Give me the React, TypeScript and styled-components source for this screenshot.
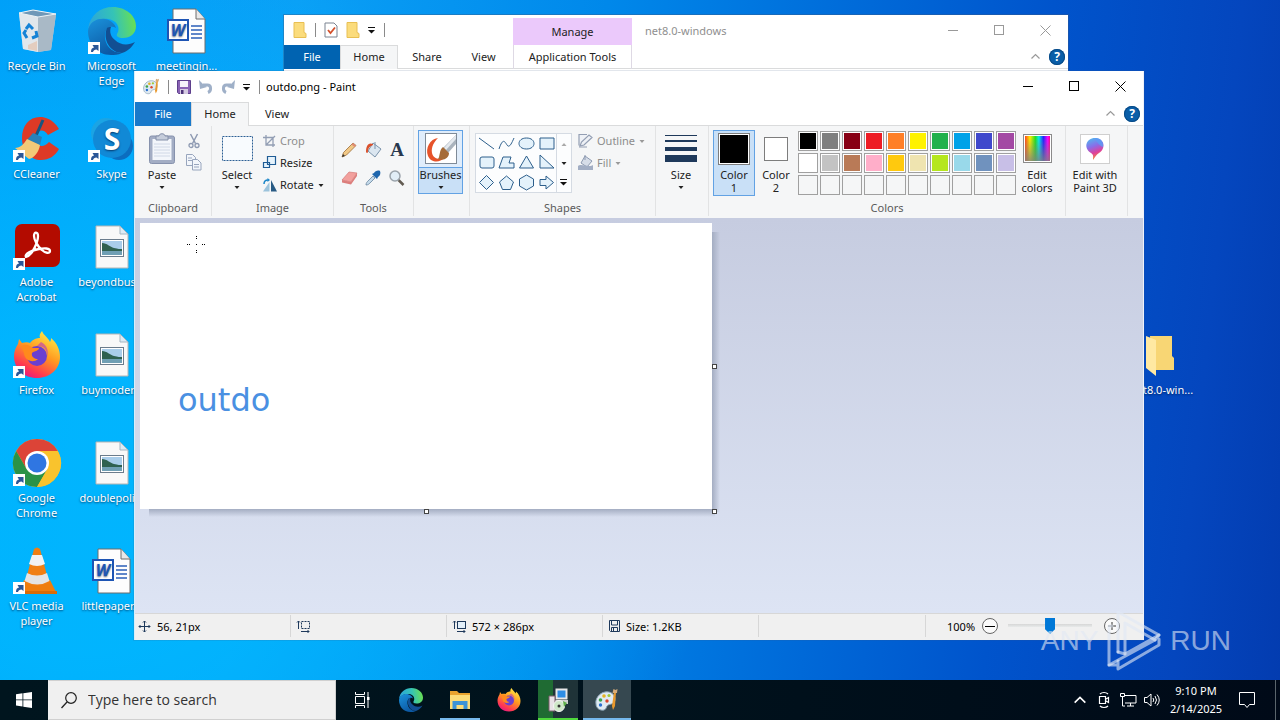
import React from "react";
import styled, { createGlobalStyle, css } from "styled-components";

const Global = createGlobalStyle`
  *, *::before, *::after { box-sizing: border-box; }
  html, body { margin: 0; height: 100%; }
  #root { height: 100%; }
  body, button, input {
    font-family: "Noto Sans", "Open Sans", sans-serif;
    font-size: 11px;
    line-height: 15px;
  }
  button { border: 0; padding: 0; margin: 0; background: none; color: inherit; }
  svg { display: block; flex: none; overflow: visible; }
`;

/* ---------- desktop ---------- */

const Screen = styled.div`
  min-height: 100vh;
  display: flex;
  flex-direction: column;
  overflow: hidden;
`;

const Desktop = styled.main`
  position: relative;
  flex: 1;
  overflow: hidden;
  background:
    radial-gradient(ellipse 50% 80% at 6% 72%, rgba(0, 184, 255, 0.85) 30%, rgba(0, 184, 255, 0) 100%),
    linear-gradient(96deg, #009df8 0%, #0aa0f6 22%, #0088ea 45%, #0070dc 60%, #0054cc 78%, #0446be 92%, #033cb0 100%);
`;

const IconGrid = styled.div`
  display: grid;
  grid-template-columns: repeat(auto-fill, 75px);
  grid-template-rows: repeat(6, 108px);
`;

const Shortcut = styled.button<{ $col: number; $row: number }>`
  grid-column: ${(p) => p.$col};
  grid-row: ${(p) => p.$row};
  display: flex;
  flex-direction: column;
  align-items: center;
  gap: 3px;
  padding: 7px 2px 0 0;
  color: #fff;
  text-shadow: 0 1px 2px rgba(0, 20, 60, 0.7);
`;

const ShortcutLabel = styled.span`
  width: 68px;
  text-align: center;
`;

/* ---------- windows ---------- */

const Win = styled.section`
  position: absolute;
  display: flex;
  flex-direction: column;
  background: #fff;
  color: #222;
`;

const ExplorerWin = styled(Win)`
  top: 15px;
  left: 284px;
  right: 212px;
  height: 400px;
  box-shadow: 0 0 0 1px rgba(60, 90, 130, 0.4);
`;

const PaintWin = styled(Win)`
  top: 71px;
  left: 134px;
  right: 136px;
  bottom: 40px;
  border-left: 1px solid #d5eefb;
  border-right: 1px solid #eef1fa;
  box-shadow: 0 0 0 1px rgba(60, 90, 130, 0.15);
`;

const TitleBar = styled.header<{ $h: number }>`
  display: flex;
  align-items: center;
  height: ${(p) => p.$h}px;
  flex: none;
`;

const QuickBar = styled.div<{ $pad: number }>`
  display: flex;
  align-items: center;
  gap: 8px;
  padding-left: ${(p) => p.$pad}px;
`;

const Bar = styled.span`
  width: 1px;
  height: 14px;
  background: #8a8a8a;
`;

const WinTitle = styled.h1<{ $muted?: boolean; $pad: number }>`
  margin: 0;
  flex: 1;
  padding-left: ${(p) => p.$pad}px;
  font-size: 11px;
  font-weight: 400;
  color: ${(p) => (p.$muted ? "#8f8f8f" : "#000")};
`;

const CaptionButton = styled.button<{ $muted?: boolean }>`
  width: 46px;
  height: 30px;
  display: grid;
  place-items: center;
  color: ${(p) => (p.$muted ? "#999" : "#000")};
`;

const TabRow = styled.nav`
  display: flex;
  height: 24px;
  flex: none;
  border-bottom: 1px solid #dadbdc;
`;

const Tab = styled.button<{ $kind?: "file" | "active"; $w?: number; $file?: string }>`
  height: 24px;
  width: ${(p) => p.$w ?? 56}px;
  padding-bottom: 1px;
  ${(p) =>
    p.$kind === "file" &&
    css`
      background: ${p.$file ?? "#1979ca"};
      color: #fff;
    `}
  ${(p) =>
    p.$kind === "active" &&
    css`
      background: #f5f6f7;
      border: 1px solid #dadbdc;
      border-bottom: 0;
      padding-bottom: 2px;
    `}
`;

const TabTools = styled.div`
  margin-left: auto;
  display: flex;
  align-items: center;
  gap: 9px;
  padding-right: 3px;
`;

const HelpButton = styled.button`
  width: 16px;
  height: 16px;
  border-radius: 50%;
  background: #0a5ea8;
  box-shadow: inset 0 0 0 1px #084a86;
  color: #fff;
  font-weight: 700;
  font-size: 12px;
  line-height: 16px;
`;

const Manage = styled.div`
  align-self: flex-end;
  width: 119px;
  height: 27px;
  margin-left: 128px;
  background: #ebc9fb;
  text-align: center;
  line-height: 28px;
`;

const ContextTab = styled(Tab)`
  margin-left: 2px;
  border-left: 1px solid #ded9e4;
  border-right: 1px solid #ded9e4;
`;

/* ---------- ribbon ---------- */

const Ribbon = styled.div`
  display: flex;
  height: 92px;
  flex: none;
  background: #f5f6f7;
  padding-bottom: 2px;
  overflow: hidden;
`;

const Group = styled.section<{ $w: number }>`
  flex: none;
  width: ${(p) => p.$w}px;
  display: flex;
  flex-direction: column;
  padding-top: 4px;
  border-right: 1px solid #e2e3e4;
`;

const GroupBody = styled.div<{ $pad?: number; $gap?: number }>`
  display: flex;
  gap: ${(p) => p.$gap ?? 0}px;
  padding-left: ${(p) => p.$pad ?? 4}px;
  height: 66px;
`;

const GroupLabel = styled.h2`
  margin: 4px 0 0;
  font-size: 11px;
  line-height: 15px;
  font-weight: 400;
  text-align: center;
  color: #5a5a5a;
`;

const BigButton = styled.button<{ $w: number; $on?: boolean }>`
  flex: none;
  width: ${(p) => p.$w}px;
  height: 66px;
  display: flex;
  flex-direction: column;
  align-items: center;
  padding-top: 2px;
  border: 1px solid ${(p) => (p.$on ? "#62a2e4" : "transparent")};
  background: ${(p) => (p.$on ? "#c9e0f7" : "transparent")};
  line-height: 13px;
  white-space: pre-line;
`;

const BrushButton = styled(BigButton)`
  height: 64px;
  background: linear-gradient(#e0edfb 36px, #62a2e4 36px, #62a2e4 37px, #c9e0f7 37px);
`;

const IconSlot = styled.span`
  height: 31px;
  margin-bottom: 4px;
  display: flex;
  align-items: center;
  justify-content: center;
`;

const Stack = styled.div<{ $pad?: number; $center?: boolean }>`
  display: flex;
  flex-direction: column;
  padding-left: ${(p) => p.$pad ?? 0}px;
  ${(p) => p.$center && "align-items: center;"}
`;

const SmallButton = styled.button<{ $off?: boolean }>`
  display: flex;
  align-items: center;
  gap: 4px;
  height: 22px;
  padding-bottom: 1px;
  color: ${(p) => (p.$off ? "#8d8d8d" : "#222")};
`;

const ToolGrid = styled.div`
  display: grid;
  grid-template-columns: repeat(3, 24px);
  grid-template-rows: repeat(2, 28px);
  padding-top: 6px;
`;

const CellButton = styled.button`
  display: grid;
  place-items: center;
`;

const Gallery = styled.div`
  display: flex;
  height: 60px;
  margin-top: 3px;
  border: 1px solid #d5dbe3;
  background: #fcfdfe;
`;

const ShapeGrid = styled.div`
  display: grid;
  grid-template-columns: repeat(4, 20px);
  grid-template-rows: 18px 20px 20px;
`;

const GalleryScroll = styled.div`
  display: grid;
  grid-template-rows: repeat(3, 1fr);
  width: 15px;
  border-left: 1px solid #d5dbe3;
`;

const Swatch = styled.span<{ $c: string; $s: number }>`
  width: ${(p) => p.$s}px;
  height: ${(p) => p.$s}px;
  background: ${(p) => p.$c};
  border: 1px solid #7d7d7d;
  box-shadow: inset 0 0 0 1px #fff;
`;

const Palette = styled.div`
  display: grid;
  grid-template-columns: repeat(10, 20px);
  grid-auto-rows: 20px;
  gap: 2px;
  padding-top: 1px;
  margin-left: 1px;
  height: 66px;
`;

const Color = styled.button<{ $c?: string }>`
  border: 1px solid #a0a0a0;
  background: ${(p) => p.$c ?? "#f5f6f7"};
  box-shadow: inset 0 0 0 1px ${(p) => (p.$c ? "#fff" : "#f5f6f7")};
`;

const Spectrum = styled.span`
  width: 29px;
  height: 29px;
  border: 1px solid #8b8b8b;
  box-shadow: inset 0 0 0 1px #fff;
  background:
    linear-gradient(transparent 10%, rgba(128, 128, 128, 0.85)),
    linear-gradient(90deg, #f22, #fe0 22%, #2d2 42%, #0ee 55%, #22f 72%, #f0f 88%, #f04);
`;

const Tile = styled.span`
  width: 30px;
  height: 30px;
  display: grid;
  place-items: center;
  border: 1px solid #cfcfcf;
  background: #fff;
`;

/* ---------- work area ---------- */

const WorkArea = styled.div`
  flex: 1;
  min-height: 0;
  padding: 5px;
  overflow: hidden;
  background: linear-gradient(#c6cce0, #dde4f4);
`;

const Sheet = styled.div`
  position: relative;
  width: 572px;
  height: 286px;
  background: #fff;
  &::before {
    content: "";
    position: absolute;
    left: 9px;
    right: -3px;
    top: 100%;
    height: 8px;
    background: linear-gradient(#a4adc2, rgba(190, 199, 218, 0));
  }
  &::after {
    content: "";
    position: absolute;
    left: 100%;
    top: 9px;
    bottom: -3px;
    width: 8px;
    background: linear-gradient(90deg, #a4adc2, rgba(190, 199, 218, 0));
  }
`;

const Handle = styled.span<{ $x: string; $y: string }>`
  position: absolute;
  z-index: 1;
  left: ${(p) => p.$x};
  top: ${(p) => p.$y};
  width: 5px;
  height: 5px;
  background: #fff;
  border: 1px solid #444;
`;

const Drawn = styled.span`
  position: absolute;
  left: 38px;
  top: 158px;
  font-family: "DejaVu Sans", sans-serif;
  font-size: 32px;
  line-height: 38px;
  color: #4a90e2;
`;

const Cursor = styled.svg`
  position: absolute;
  left: 46px;
  top: 12px;
`;

/* ---------- status bar ---------- */

const StatusBar = styled.footer`
  display: flex;
  height: 27px;
  flex: none;
  background: #f0f0f0;
  border-top: 1px solid #d7d7d7;
  padding-bottom: 2px;
  color: #000;
`;

const StatusCell = styled.div<{ $w?: number; $pad?: number }>`
  ${(p) => (p.$w ? `width: ${p.$w}px;` : "flex: 1;")}
  display: flex;
  align-items: center;
  gap: 6px;
  padding-left: ${(p) => p.$pad ?? 6}px;
  margin: 1px 0;
  border-right: 1px solid #d7d7d7;
`;

const ZoomBox = styled.div`
  width: 217px;
  display: flex;
  align-items: center;
  padding-left: 21px;
`;

const RoundButton = styled.button`
  width: 16px;
  height: 16px;
  margin-left: 7px;
  display: grid;
  place-items: center;
  border: 1px solid #666;
  border-radius: 50%;
  background: #fafafa;
`;

const Slider = styled.input`
  appearance: none;
  width: 84px;
  height: 20px;
  margin: 0 5px 0 10px;
  background: linear-gradient(transparent 8px, #d6d6d6 8px, #e7eaea 11px, transparent 11px);
  &::-webkit-slider-thumb {
    appearance: none;
    width: 10px;
    height: 16px;
    background: #0078d7;
    clip-path: polygon(0 0, 100% 0, 100% 70%, 50% 100%, 0 70%);
  }
`;

/* ---------- watermark ---------- */

const Watermark = styled.div`
  position: absolute;
  right: 49px;
  bottom: 6px;
  display: flex;
  align-items: center;
  gap: 8px;
  pointer-events: none;
  color: rgba(225, 232, 245, 0.62);
  font-family: "Liberation Sans Narrow", "Liberation Sans", sans-serif;
  font-size: 28px;
  line-height: 66px;
`;

/* ---------- taskbar ---------- */

const Taskbar = styled.nav`
  display: flex;
  height: 40px;
  flex: none;
  background: linear-gradient(90deg, #00151e, #00121c 50%, #000a18);
  color: #fff;
`;

const StartButton = styled.button`
  width: 48px;
  display: grid;
  place-items: center;
`;

const Search = styled.label`
  width: 288px;
  display: flex;
  align-items: center;
  gap: 11px;
  padding-left: 12px;
  background: #f0f0f0;
  border: 1px solid #d0d0d0;
  border-left-color: #f0f0f0;
`;

const SearchInput = styled.input`
  flex: 1;
  min-width: 0;
  border: 0;
  padding: 0;
  background: none;
  font-family: "Open Sans", "Noto Sans", sans-serif;
  font-size: 14px;
  line-height: 20px;
  &::placeholder { color: #333; opacity: 1; }
`;

const Apps = styled.div`
  display: flex;
  gap: 1px;
  flex: 1;
  padding-left: 2px;
`;

const AppButton = styled.button<{ $line?: string; $bg?: string; $wide?: boolean }>`
  width: ${(p) => (p.$wide ? 48 : 40)}px;
  margin: 0 ${(p) => (p.$wide ? 0 : 4)}px;
  display: grid;
  place-items: center;
  background: ${(p) => p.$bg ?? "none"};
  box-shadow: ${(p) => (p.$line ? `inset 0 -2px ${p.$line}` : "none")};
`;

const Tray = styled.div`
  display: flex;
  align-items: center;
`;

const TrayButton = styled.button<{ $w?: number }>`
  width: ${(p) => p.$w ?? 24}px;
  height: 40px;
  display: grid;
  place-items: center;
`;

const Clock = styled.button`
  width: 64px;
  height: 40px;
  line-height: 18px;
`;

const ShowDesktop = styled.button`
  width: 5px;
  height: 40px;
  margin-left: 9px;
  border-left: 1px solid #5a656c;
`;

/* ---------- icons ---------- */

const Arrow = () => (
  <g transform="translate(-1 -1)">
    <rect x="1" y="36" width="12" height="12" fill="#fff" />
    <path d="M4 46c0-3 1-4 3-4.500l-1.500-2.500h6v6l-2-1.500c-2 0-3 1-3.500 2.500z" fill="#2b5797" />
  </g>
);

const RecycleIcon = () => (
  <svg width="48" height="48" viewBox="0 0 48 48">
    <path d="M6 6l14-3 23 4-5 36-13 2-15-3z" fill="#c3d3de" opacity=".95" />
    <path d="M6 6l19 4v35l-15-3z" fill="#e1e7ec" />
    <path d="M25 10l18-3-5 36-13 2z" fill="#a9b9c6" />
    <path d="M6 6l14-3 23 4-18 3z" fill="#6f98b8" stroke="#eef3f6" />
    <path d="M15 38l9-4v10l-9-2z" fill="#e3cdbf" />
    <g fill="none" stroke="#1683d6" strokeWidth="3">
      <path d="M13 22l3-4 4 4M23 24l1 5-5 2M14 31l-3-5 2-3" />
    </g>
  </svg>
);

const EdgeIcon = ({ s = 48, link = true }: { s?: number; link?: boolean }) => (
  <svg width={s} height={s} viewBox="0 0 48 48">
    <defs>
      <linearGradient id="eg1" x1="0" y1="0.5" x2="1" y2="0.4">
        <stop offset="0" stopColor="#2ba4dc" />
        <stop offset=".55" stopColor="#35c3b6" />
        <stop offset="1" stopColor="#6be04f" />
      </linearGradient>
      <linearGradient id="eg2" x1="0" y1="0" x2="0.5" y2="1">
        <stop offset="0" stopColor="#1b93dc" />
        <stop offset="1" stopColor="#0c59a4" />
      </linearGradient>
    </defs>
    <path d="M0 22C2 8 12 0 25 0c13 0 23 9 23 19 0 8-6 12-13 12-5 0-7-2-6-4 4-6 0-14-9-15C11 11 4 14 0 22z" fill="url(#eg1)" />
    <path d="M0 24c1-8 8-13 17-12 6 1 10 5 11 9-4-3-10-1-11 6-1 10 6 19 17 19-4 2-8 2-11 2C9 48 0 37 0 24z" fill="url(#eg2)" />
    <path d="M19 21c-5 12 4 25 15 25 6-2 10-6 13-11-7 4-15 3-20-2-4-3-6-8-4-13-2 0-3 0-4 1z" fill="#124f93" />
    {link && <Arrow />}
  </svg>
);

const WordIcon = () => (
  <svg width="48" height="48" viewBox="0 0 48 48">
    <path d="M10 2h23l9 10v34H10z" fill="#fdfdfd" stroke="#6d6d6d" />
    <path d="M33 2v10h9" fill="#e8e8e8" stroke="#6d6d6d" />
    <path d="M28 19h11M28 23h11M28 27h11M28 31h11" stroke="#2b5fb8" strokeWidth="1.500" />
    <rect x="5" y="13" width="20" height="20" fill="#fff" stroke="#1e55b4" strokeWidth="2" />
    <text x="15" y="29" textAnchor="middle" fontFamily="Open Sans, sans-serif" fontWeight="700" fontStyle="italic" fontSize="16" fill="#1e55b4">W</text>
  </svg>
);

const ImageFileIcon = () => (
  <svg width="48" height="48" viewBox="0 0 48 48">
    <path d="M8 3h24l8 8v34H8z" fill="#f8f8f8" stroke="#b5b5b5" />
    <path d="M32 3v8h8z" fill="#dcebf5" stroke="#a5b5c0" />
    <rect x="12.500" y="16.500" width="23" height="17" fill="#fff" stroke="#6b7c8c" />
    <rect x="14" y="18" width="20" height="14" fill="#a9cdea" />
    <path d="M14 20c5 0 8 4 12 5s6 1 8 1v3H14z" fill="#2f6150" />
    <path d="M14 28h20v4H14z" fill="#6f9fb4" />
  </svg>
);

const CCleanerIcon = () => (
  <svg width="48" height="48" viewBox="0 0 48 48">
    <path d="M46 14C40 4 32 2 27 2 16 2 9 11 9 23c0 14 9 22 19 22 8 0 14-4 18-11l-10-7c-6 7-14 4-14-4 0-7 8-11 13-3z" fill="#dd3a26" />
    <path d="M30 5l-8 18" stroke="#17557f" strokeWidth="3" />
    <path d="M20 18l9 4-2 8-13-5z" fill="#2781b9" />
    <path d="M14 24l13 6c-1 7-6 13-11 14L2 33c5 0 9-4 12-9z" fill="#f2c978" />
    <Arrow />
  </svg>
);

const SkypeIcon = () => (
  <svg width="48" height="48" viewBox="0 0 48 48">
    <circle cx="18" cy="18" r="15" fill="#1ba4e4" />
    <circle cx="31" cy="31" r="14" fill="#0c6dbf" />
    <circle cx="24" cy="24" r="19" fill="#1189d6" />
    <text x="24" y="35" textAnchor="middle" fontFamily="Open Sans, sans-serif" fontWeight="700" fontSize="30" fill="#fff">S</text>
    <Arrow />
  </svg>
);

const AcrobatIcon = () => (
  <svg width="48" height="48" viewBox="0 0 48 48">
    <rect x="2" y="1" width="45" height="43" rx="7" fill="#b30b00" />
    <path d="M13 34c-2-3 6-7 13-8 5-1 11-1 11 2s-5 2-8-1c-5-4-8-11-8-14 0-5 4-4 4 0 0 5-5 19-12 21z" fill="none" stroke="#fff" strokeWidth="2.300" />
    <Arrow />
  </svg>
);

const FirefoxIcon = ({ s = 48, link = true }: { s?: number; link?: boolean }) => (
  <svg width={s} height={s} viewBox="0 0 48 48">
    <defs>
      <linearGradient id="ff" x1="0.8" y1="0" x2="0.25" y2="1">
        <stop offset="0" stopColor="#fff04a" />
        <stop offset=".45" stopColor="#ff9a20" />
        <stop offset=".8" stopColor="#ff3a50" />
        <stop offset="1" stopColor="#e31587" />
      </linearGradient>
    </defs>
    <path d="M29 0c2 5 6 6 8 11 1-2 1-3 1-4 6 5 9 12 9 19 0 12-10 21-23 21S1 38 1 25c0-5 2-9 4-12l1-5c1 1 2 3 3 4 3-1 6-1 8 0 3-4 7-5 10-5-1-2 0-5 2-7z" fill="url(#ff)" />
    <circle cx="24" cy="25" r="10" fill="#6b3fd0" />
    <path d="M8 15c5-3 9 0 12 2h6c0 3-5 3-7 5-1 4 3 6 6 6-5 5-14 1-14-6z" fill="#ff8a1c" />
    <path d="M24 15c7-1 11 5 10 11 2-6 0-12-6-15z" fill="#b833c4" opacity=".6" />
    {link && <Arrow />}
  </svg>
);

const ChromeIcon = () => (
  <svg width="48" height="48" viewBox="0 0 48 48">
    <circle cx="24" cy="24" r="24" fill="#f9c32d" />
    <path d="M3.200 12A24 24 0 0 1 44.800 12H24L13.600 30z" fill="#dc4437" />
    <path d="M3.200 12A24 24 0 0 0 24 48l10.400-18H13.600z" fill="#2a9247" />
    <path d="M24 12h20.800A24 24 0 0 1 24 48l10.400-18z" fill="#f9c32d" />
    <circle cx="24" cy="24" r="12" fill="#fff" />
    <circle cx="24" cy="24" r="9.500" fill="#2f76e2" />
    <Arrow />
  </svg>
);

const VlcIcon = () => (
  <svg width="48" height="48" viewBox="0 0 48 48">
    <path d="M11 33h26l6 12H7z" fill="#ef7d0e" />
    <path d="M21 2q3-3 6 0l9 34q-12 6-24 0z" fill="#f07f13" />
    <path d="M19 8h10l3 9q-8 4-16 0z" fill="#f2f2f2" />
    <path d="M14 26q10 5 20 0l2.500 8q-12 7-25 0z" fill="#e4e4e4" />
    <path d="M6 44h38v3H6z" fill="#d96b06" />
    <Arrow />
  </svg>
);

const OpenFolderIcon = () => (
  <svg width="48" height="48" viewBox="0 0 48 48">
    <path d="M12 5h22v20l2 2v12H14z" fill="#f8d674" />
    <path d="M8 5l10 4v36L8 37z" fill="#ffe9a2" />
  </svg>
);

const FolderSmall = () => (
  <svg width="14" height="16" viewBox="0 0 14 16">
    <path d="M1 .5h10v10l2 1v4H1z" fill="#fbdc7c" stroke="#e8bf52" />
  </svg>
);

const CheckDoc = () => (
  <svg width="14" height="16" viewBox="0 0 14 16">
    <path d="M1 1h9l3 3v11H1z" fill="#fff" stroke="#7b8391" />
    <path d="M4 8l2.500 3L11 5.500" fill="none" stroke="#d4502b" strokeWidth="1.800" />
  </svg>
);

const QatArrow = () => (
  <svg width="8" height="8" viewBox="0 0 8 8">
    <path d="M0 1.500h7" stroke="#111" />
    <path d="M0 4h7L3.500 7.500z" fill="#111" />
  </svg>
);

const Down = ({ c = "#222", up = false }: { c?: string; up?: boolean }) => (
  <svg width="6" height="12" viewBox="0 0 6 12">
    <path d={up ? "M.5 8h5L3 5z" : "M.5 5h5L3 8z"} fill={c} />
  </svg>
);

const PaletteIcon = ({ s = 24 }: { s?: number }) => (
  <svg width={s} height={s} viewBox="0 0 24 24">
    <path d="M10 4C4 5 0 11 1 16c0 4 4 7 8 6 3-1 2-4 4-5 3-1 7-1 7-6 0-5-5-8-10-7z" fill="#dfeaf2" stroke="#8aa3b5" />
    <circle cx="5.500" cy="12" r="1.800" fill="#3fa34d" />
    <circle cx="9" cy="8" r="1.800" fill="#e6b422" />
    <circle cx="14" cy="7.500" r="1.600" fill="#a2c93a" />
    <circle cx="5.500" cy="17" r="1.700" fill="#2a6fd0" />
    <circle cx="12" cy="13" r="1.700" fill="#d9452c" />
    <path d="M19 4l2 0-1 14-2 4-1-4z" fill="#e8982c" />
    <path d="M17.500 5l1-4 2 1 2-1-.5 4z" fill="#d6ab78" />
  </svg>
);

const SaveIcon = () => (
  <svg width="14" height="14" viewBox="0 0 14 14">
    <path d="M.5.500h13v13h-12l-1-1z" fill="#8a62b4" stroke="#5d3f8c" />
    <rect x="3" y="1" width="8" height="6" fill="#f5f1fa" />
    <rect x="3" y="9" width="8" height="5" fill="#d5cbe2" />
    <rect x="4" y="10" width="2.500" height="4" fill="#4c3378" />
  </svg>
);

const UndoIcon = ({ flip = false }: { flip?: boolean }) => (
  <svg width="14" height="16" viewBox="0 0 14 16">
    <g transform={flip ? "translate(14 0) scale(-1 1)" : undefined}>
      <path d="M4 6h4.500c4 0 4 6 .5 7.500" fill="none" stroke="#9fb0c8" strokeWidth="3" />
      <path d="M0 1l1 9 7-2-3-2z" fill="#9fb0c8" />
    </g>
  </svg>
);

const Minimize = () => (
  <svg width="11" height="11" viewBox="0 0 11 11"><path d="M0 5.500h10" stroke="currentColor" /></svg>
);
const Maximize = () => (
  <svg width="11" height="11" viewBox="0 0 11 11"><rect x=".5" y=".5" width="9" height="9" fill="none" stroke="currentColor" /></svg>
);
const Close = () => (
  <svg width="11" height="11" viewBox="0 0 11 11"><path d="M.5.500l10 10M10.500.500l-10 10" stroke="currentColor" /></svg>
);
const Chevron = ({ s = 9, c = "#999" }: { s?: number; c?: string }) => (
  <svg width={s} height={s} viewBox="0 0 9 9"><path d="M.5 6.500l4-4 4 4" fill="none" stroke={c} strokeWidth="1.200" /></svg>
);

const PasteIcon = () => (
  <svg width="26" height="31" viewBox="0 0 26 31">
    <rect x=".5" y="3" width="25" height="27.500" rx="2" fill="#a3adc4" stroke="#8792ad" />
    <path d="M3.500 6h19v21h-19z" fill="#f3f6fb" />
    <path d="M5 11h16M5 14h16M5 17h16M5 20h16M5 23h16" stroke="#d0d8e6" />
    <path d="M7 7V3h3c0-3 6-3 6 0h3v4z" fill="#c6cddb" stroke="#8590a9" />
  </svg>
);

const CutIcon = () => (
  <svg width="12" height="16" viewBox="0 0 12 16">
    <path d="M2.500 1l5 9.500M9.500 1l-5 9.500" stroke="#8e9ab2" strokeWidth="1.500" />
    <circle cx="3" cy="12.500" r="2" fill="none" stroke="#8e9ab2" strokeWidth="1.300" />
    <circle cx="9" cy="12.500" r="2" fill="none" stroke="#8e9ab2" strokeWidth="1.300" />
  </svg>
);

const CopyIcon = () => (
  <svg width="16" height="17" viewBox="0 0 16 17">
    <g fill="#f3f6fb" stroke="#98a5bd">
      <path d="M.5.500h6l3 3v8h-9z" />
      <path d="M6.500 5.500h5l3.500 3.500v7H6.500z" />
      <path d="M2 4h4M2 6.500h4M8 10.500h5M8 13h5" />
    </g>
  </svg>
);

const SelectIcon = () => (
  <svg width="31" height="25" viewBox="0 0 31 25">
    <rect x=".5" y=".5" width="30" height="24" fill="#f8fbfe" stroke="#2d5f95" strokeDasharray="2 1" />
  </svg>
);

const CropIcon = () => (
  <svg width="13" height="14" viewBox="0 0 13 14">
    <path d="M3 1v10h9M0 3.500h10V13M3 11l9-9" fill="none" stroke="#929eb4" strokeWidth="1.300" />
  </svg>
);
const ResizeIcon = () => (
  <svg width="13" height="13" viewBox="0 0 13 13">
    <path d="M4.500.500h8v8h-8zM.500 6.500h6v5h-6z" fill="#e6f3fc" stroke="#1f5c95" strokeWidth="1.200" />
  </svg>
);
const RotateIcon = () => (
  <svg width="13" height="14" viewBox="0 0 13 14">
    <path d="M6.500 4v9.500H0z" fill="#9cc3dc" />
    <path d="M8 2l6 11.500H8z" fill="#285a84" />
    <path d="M1 6c0-3 2-4 4-4" fill="none" stroke="#1c86c8" strokeWidth="1.500" />
    <path d="M4.500 0v4L7 2z" fill="#1c86c8" />
  </svg>
);

const PencilIcon = () => (
  <svg width="16" height="16" viewBox="0 0 16 16">
    <path d="M1 15l1.500-4.500L12 1l3 2.500L5.500 13z" fill="#f1c886" stroke="#9c6d38" strokeWidth=".8" />
    <path d="M1 15l1-3 2 2z" fill="#333" /><path d="M12 1l3 2.500-1.500 1.500-3-2.500z" fill="#e08a74" />
  </svg>
);
const BucketIcon = () => (
  <svg width="17" height="16" viewBox="0 0 17 16">
    <path d="M8 1l8 6-6 8-7-6z" fill="#dbe6f0" stroke="#7b93ab" />
    <path d="M8 2c-5-2-7 2-7 8 1 2 2 1 2-1 0-3 2-5 5-6z" fill="#d9512c" />
    <path d="M10 0v7" stroke="#7b93ab" />
  </svg>
);
const TextIcon = () => (
  <svg width="16" height="16" viewBox="0 0 16 16">
    <text x="8" y="14" textAnchor="middle" fontFamily="Liberation Serif, serif" fontWeight="700" fontSize="19" fill="#28384e">A</text>
  </svg>
);
const EraserIcon = () => (
  <svg width="17" height="14" viewBox="0 0 17 14">
    <path d="M1 9l7-8 8 1-6 9z" fill="#f2a09d" stroke="#d47a78" strokeWidth=".7" />
    <path d="M1 9l9 2v2.500L1 11.500zM10 11l6-9v3l-6 8.500z" fill="#dc7e7c" />
  </svg>
);
const DropperIcon = () => (
  <svg width="16" height="16" viewBox="0 0 16 16">
    <path d="M1 15c0-2 1-3 2-4l5-5 2 2-5 5c-1 1-2 2-4 2z" fill="#c5daea" stroke="#67849e" strokeWidth=".8" />
    <path d="M7 4l5 5 1-2c2-1 3-4 2-6-2-1-5 0-6 2z" fill="#1e66ad" />
  </svg>
);
const MagnifierIcon = () => (
  <svg width="16" height="16" viewBox="0 0 16 16">
    <path d="M9.500 10l5 5" stroke="#625b52" strokeWidth="2.500" />
    <circle cx="6" cy="6" r="5" fill="#e1eef7" stroke="#9aa3ab" strokeWidth="1.500" />
  </svg>
);

const BrushIcon = () => (
  <svg width="32" height="31" viewBox="0 0 32 31">
    <rect x=".5" y=".5" width="31" height="30" fill="#fff" stroke="#7f8b98" />
    <path d="M13 5C5 6 0 15 3 23c3 7 12 7 16 2-6 2-11 0-12-5-1-6 2-11 6-15z" fill="#e6532a" />
    <path d="M31 2v9l-8 9-5-5z" fill="#a9b3bd" />
    <path d="M31 2L19 15l2 2L31 6z" fill="#e4e9ee" />
    <path d="M18 14l6 6c0 5-5 8-11 6 2-2 1-9 5-12z" fill="#a56b38" />
  </svg>
);

const OutlineIcon = () => (
  <svg width="15" height="15" viewBox="0 0 15 15">
    <path d="M9 1.500H1v11M2 13l1.500-4L11 2l3 2.500L6 12z" fill="#eef1f6" stroke="#939eb3" strokeWidth="1.200" />
    <path d="M1 14h8" stroke="#939eb3" />
  </svg>
);
const FillIcon = () => (
  <svg width="15" height="15" viewBox="0 0 15 15">
    <path d="M7 1l7 5-5 6-6-4z" fill="#d6dde8" stroke="#8d9ab1" />
    <path d="M0 11c3-3 11 2 15-1v5H0z" fill="#a2aec4" />
    <path d="M7 0v5" stroke="#8d9ab1" />
  </svg>
);

const SizeIcon = () => (
  <svg width="32" height="28" viewBox="0 0 32 28">
    <path d="M0 0h32v1H0zM0 5h32v2H0zM0 12h32v4H0zM0 20h32v7H0z" fill="#1e395b" />
  </svg>
);

const Balloon = () => (
  <svg width="20" height="24" viewBox="0 0 20 24">
    <defs>
      <linearGradient id="p3" x1="0.2" y1="0" x2="0.5" y2="1">
        <stop offset="0" stopColor="#4fb9f0" />
        <stop offset=".4" stopColor="#8a6de8" />
        <stop offset=".7" stopColor="#e0409a" />
        <stop offset="1" stopColor="#f59a2c" />
      </linearGradient>
    </defs>
    <path d="M10 1c10 0 11 11 4 15-3 2-4 4-6 7 0-3 1-5-2-7C-2 11 1 1 10 1z" fill="url(#p3)" />
    <path d="M10 1c6 0 9 5 8 9-3-1-6-4-8-9z" fill="#5b9cf5" opacity=".8" />
  </svg>
);

const shapes: [string, string][] = [
  ["Line", "M1 3l15 11"],
  ["Curve", "M1 14c4-12 6-7 8-4s4 0 7-7"],
  ["Oval", "M8.500 3c10 0 10 11 0 11s-10-11 0-11z"],
  ["Rectangle", "M2 3h14v11H2z"],
  ["Rounded rectangle", "M4 3h10q2 0 2 2v7q0 2-2 2H4q-2 0-2-2V5q0-2 2-2z"],
  ["Polygon", "M5 3h8l-2 6h5v5H1z"],
  ["Triangle", "M8.500 2l7 12h-14z"],
  ["Right triangle", "M2 1l14 13H2z"],
  ["Diamond", "M8.500 1.500l7 7-7 7-7-7z"],
  ["Pentagon", "M8.500 2l7 6-3 7.500h-8l-3-7.500z"],
  ["Hexagon", "M8.500 1l7 4v7l-7 4-7-4V5z"],
  ["Right arrow", "M2 5.500h6V2l7.500 6.500L8 15v-3.500H2z"],
];

const MoveIcon = () => (
  <svg width="13" height="13" viewBox="0 0 13 13">
    <path d="M6.500 1v11M1 6.500h11M5 2.500L6.500 1 8 2.500M5 10.500L6.500 12 8 10.500M2.500 5L1 6.500 2.500 8M10.500 5L12 6.500 10.500 8" fill="none" stroke="#1e395b" />
  </svg>
);
const DimIcon = ({ dash = false }: { dash?: boolean }) => (
  <svg width="13" height="13" viewBox="0 0 13 13">
    <rect x="4.500" y="1.500" width="8" height="7" fill={dash ? "none" : "#e3f0fa"} stroke="#1e395b" strokeDasharray={dash ? "2 1" : undefined} />
    <path d="M1.500 9V1M0 2.500L1.500 1 3 2.500M4 11.500h8M10.500 10l1.500 1.500-1.500 1.500" fill="none" stroke="#1e395b" />
  </svg>
);
const DiskIcon = () => (
  <svg width="11" height="12" viewBox="0 0 11 12">
    <path d="M.5.500h10v11h-9l-1-1zM2.500 1v4h6V1M2.500 11V7.500h6V11M4.500 8v3" fill="none" stroke="#1e395b" />
  </svg>
);

const WindowsLogo = () => (
  <svg width="16" height="16" viewBox="0 0 16 16">
    <path d="M0 2.200L6.500 1.300V7.500H0zM7.300 1.200L16 0v7.500H7.300zM0 8.300h6.500v6.200L0 13.600zM7.300 8.300H16V16l-8.700-1.200z" fill="#fff" />
  </svg>
);
const SearchIcon = () => (
  <svg width="16" height="17" viewBox="0 0 16 17">
    <circle cx="10" cy="6" r="5.300" fill="none" stroke="#222" strokeWidth="1.200" />
    <path d="M6 10L.5 16" stroke="#222" strokeWidth="1.300" />
  </svg>
);
const TaskViewIcon = () => (
  <svg width="16" height="16" viewBox="0 0 16 16">
    <path d="M1.500 0v2.500h9V0M1.500 16v-2.500h9V16M1.500 4.500h9v7h-9zM14 0v16" fill="none" stroke="#fff" />
    <rect x="13" y="5" width="2.500" height="3" fill="#fff" />
  </svg>
);
const FilesIcon = () => (
  <svg width="22" height="20" viewBox="0 0 22 20">
    <path d="M1 1h7l2 2h11v16H1z" fill="#e9a32e" />
    <path d="M1 5h20v14H1z" fill="#fcdc78" />
    <path d="M3.500 19v-8h15v8h-4v-4h-7v4z" fill="#3d93d6" />
  </svg>
);
const InstallerIcon = () => (
  <svg width="22" height="24" viewBox="0 0 22 24">
    <rect x="9.500" y="1.500" width="10" height="9" fill="#2d8ee6" stroke="#e8e8e8" strokeWidth="2" />
    <path d="M8 12h13v4H8z" fill="#d0d0d0" />
    <path d="M2 8h6v15H2z" fill="#e8e2e6" stroke="#7a5a6a" />
    <circle cx="12" cy="18" r="5.500" fill="#cfe8c8" stroke="#f5f5f5" />
    <circle cx="12" cy="18" r="1.500" fill="#333" />
    <path d="M16 13l4 2-3 4z" fill="#5fae48" />
  </svg>
);
const MeetIcon = () => (
  <svg width="14" height="18" viewBox="0 0 14 18">
    <path d="M2.500 5.500h6v7h-6zM9 8l2.500-1.500v5L9 10M3 3c2-2 6-2 8 0M3 15c2 2 6 2 8 0" fill="none" stroke="#fff" strokeWidth="1.200" />
  </svg>
);
const NetworkIcon = () => (
  <svg width="17" height="14" viewBox="0 0 17 14">
    <path d="M5 2.500h11v7.500H5M10.500 10v3M7 13h7M.5.500h4v3h-4zM2.500 3.500V13H5" fill="none" stroke="#fff" />
  </svg>
);
const VolumeIcon = () => (
  <svg width="17" height="14" viewBox="0 0 17 14">
    <path d="M.5 4.500h2.500l4-3.500v12L3 9.500H.5zM9 5q1.500 2 0 4M11 3q3 4 0 8M13 1.500q4.500 5.500 0 11" fill="none" stroke="#fff" />
  </svg>
);
const NoticeIcon = () => (
  <svg width="16" height="17" viewBox="0 0 16 17">
    <path d="M.5.500h15v12h-5L8 15.500 5.500 12.500h-5z" fill="none" stroke="#fff" />
  </svg>
);

const PlayMark = () => (
  <svg width="56" height="62" viewBox="0 0 56 62">
    <g fill="none" stroke="currentColor" strokeWidth="3" strokeLinejoin="round" strokeLinecap="round">
      <path d="M12 42V2l41 23-4 5-30-17v31" />
      <path d="M6 16H3v39l46-25M12 42l7 2 34-19" />
      <path d="M3 55h9M12 51v8l41-24v-6" />
    </g>
  </svg>
);

/* ---------- data ---------- */

const shortcuts: { label: string; col: number; row: number; icon: React.ReactNode }[] = [
  { label: "Recycle Bin", col: 1, row: 1, icon: <RecycleIcon /> },
  { label: "CCleaner", col: 1, row: 2, icon: <CCleanerIcon /> },
  { label: "Adobe Acrobat", col: 1, row: 3, icon: <AcrobatIcon /> },
  { label: "Firefox", col: 1, row: 4, icon: <FirefoxIcon /> },
  { label: "Google Chrome", col: 1, row: 5, icon: <ChromeIcon /> },
  { label: "VLC media player", col: 1, row: 6, icon: <VlcIcon /> },
  { label: "Microsoft Edge", col: 2, row: 1, icon: <EdgeIcon /> },
  { label: "Skype", col: 2, row: 2, icon: <SkypeIcon /> },
  { label: "beyondbus...", col: 2, row: 3, icon: <ImageFileIcon /> },
  { label: "buymoder...", col: 2, row: 4, icon: <ImageFileIcon /> },
  { label: "doublepoli...", col: 2, row: 5, icon: <ImageFileIcon /> },
  { label: "littlepaper...", col: 2, row: 6, icon: <WordIcon /> },
  { label: "meetingin...", col: 3, row: 1, icon: <WordIcon /> },
  { label: "net8.0-win...", col: 16, row: 4, icon: <OpenFolderIcon /> },
];

const colors = [
  "#000000", "#7f7f7f", "#880015", "#ed1c24", "#ff7f27", "#fff200", "#22b14c", "#00a2e8", "#3f48cc", "#a349a4",
  "#ffffff", "#c3c3c3", "#b97a57", "#ffaec9", "#ffc90e", "#efe4b0", "#b5e61d", "#99d9ea", "#7092be", "#c8bfe7",
];

const tools: [string, React.ReactNode][] = [
  ["Pencil", <PencilIcon />],
  ["Fill with color", <BucketIcon />],
  ["Text", <TextIcon />],
  ["Eraser", <EraserIcon />],
  ["Color picker", <DropperIcon />],
  ["Magnifier", <MagnifierIcon />],
];

const Captions = ({ muted }: { muted?: boolean }) => (
  <>
    <CaptionButton $muted={muted} aria-label="Minimize"><Minimize /></CaptionButton>
    <CaptionButton $muted={muted} aria-label="Maximize"><Maximize /></CaptionButton>
    <CaptionButton $muted={muted} aria-label="Close"><Close /></CaptionButton>
  </>
);

const Explorer = () => (
  <ExplorerWin aria-label="net8.0-windows">
    <TitleBar $h={30}>
      <QuickBar $pad={9}>
        <FolderSmall />
        <Bar />
        <CheckDoc />
        <FolderSmall />
        <QatArrow />
        <Bar />
      </QuickBar>
      <Manage>Manage</Manage>
      <WinTitle $muted $pad={13}>net8.0-windows</WinTitle>
      <Captions muted />
    </TitleBar>
    <TabRow>
      <Tab $kind="file" $file="#0063b1">File</Tab>
      <Tab $kind="active" $w={58}>Home</Tab>
      <Tab $w={58}>Share</Tab>
      <Tab $w={55}>View</Tab>
      <ContextTab $w={119}>Application Tools</ContextTab>
      <TabTools>
        <Chevron />
        <HelpButton aria-label="Help">?</HelpButton>
      </TabTools>
    </TabRow>
  </ExplorerWin>
);

const PaintRibbon = () => (
  <Ribbon>
    <Group $w={77}>
      <GroupBody>
        <BigButton $w={46}>
          <IconSlot><PasteIcon /></IconSlot>
          Paste
          <Down />
        </BigButton>
        <Stack $pad={1} $center>
          <SmallButton aria-label="Cut"><CutIcon /></SmallButton>
          <SmallButton aria-label="Copy"><CopyIcon /></SmallButton>
        </Stack>
      </GroupBody>
      <GroupLabel>Clipboard</GroupLabel>
    </Group>
    <Group $w={122}>
      <GroupBody>
        <BigButton $w={42}>
          <IconSlot><SelectIcon /></IconSlot>
          Select
          <Down />
        </BigButton>
        <Stack $pad={5}>
          <SmallButton $off><CropIcon />Crop</SmallButton>
          <SmallButton><ResizeIcon />Resize</SmallButton>
          <SmallButton><RotateIcon />Rotate<Down /></SmallButton>
        </Stack>
      </GroupBody>
      <GroupLabel>Image</GroupLabel>
    </Group>
    <Group $w={80}>
      <GroupBody $pad={3}>
        <ToolGrid>
          {tools.map(([name, icon]) => (
            <CellButton key={name} aria-label={name}>{icon}</CellButton>
          ))}
        </ToolGrid>
      </GroupBody>
      <GroupLabel>Tools</GroupLabel>
    </Group>
    <Group $w={56}>
      <GroupBody>
        <BrushButton $w={45} $on>
          <IconSlot><BrushIcon /></IconSlot>
          Brushes
          <Down />
        </BrushButton>
      </GroupBody>
    </Group>
    <Group $w={186}>
      <GroupBody $pad={5} $gap={6}>
        <Gallery>
          <ShapeGrid>
            {shapes.map(([name, d]) => (
              <CellButton key={name} aria-label={name}>
                <svg width="17" height="17" viewBox="0 0 17 17">
                  <path d={d} fill={name === "Line" || name === "Curve" ? "none" : "#e4f2fb"} stroke="#2d5f8c" />
                </svg>
              </CellButton>
            ))}
          </ShapeGrid>
          <GalleryScroll>
            <CellButton aria-label="Scroll up"><Down up c="#aaa" /></CellButton>
            <CellButton aria-label="Scroll down"><Down /></CellButton>
            <CellButton aria-label="More shapes"><QatArrow /></CellButton>
          </GalleryScroll>
        </Gallery>
        <Stack>
          <SmallButton $off><OutlineIcon />Outline<Down c="#999" /></SmallButton>
          <SmallButton $off><FillIcon />Fill<Down c="#999" /></SmallButton>
        </Stack>
      </GroupBody>
      <GroupLabel>Shapes</GroupLabel>
    </Group>
    <Group $w={53}>
      <GroupBody>
        <BigButton $w={42}>
          <IconSlot><SizeIcon /></IconSlot>
          Size
          <Down />
        </BigButton>
      </GroupBody>
    </Group>
    <Group $w={357}>
      <GroupBody>
        <BigButton $w={42} $on>
          <IconSlot><Swatch $c="#000" $s={32} /></IconSlot>
          {"Color\n1"}
        </BigButton>
        <BigButton $w={42}>
          <IconSlot><Swatch $c="#fff" $s={24} /></IconSlot>
          {"Color\n2"}
        </BigButton>
        <Palette>
          {Array.from({ length: 30 }, (_, i) => (
            <Color key={i} $c={colors[i]} aria-label={colors[i] ?? "Custom color"} />
          ))}
        </Palette>
        <BigButton $w={42}>
          <IconSlot><Spectrum /></IconSlot>
          {"Edit\ncolors"}
        </BigButton>
      </GroupBody>
      <GroupLabel>Colors</GroupLabel>
    </Group>
    <Group $w={62}>
      <GroupBody $pad={1}>
        <BigButton $w={56}>
          <IconSlot><Tile><Balloon /></Tile></IconSlot>
          {"Edit with\nPaint 3D"}
        </BigButton>
      </GroupBody>
    </Group>
  </Ribbon>
);

const Paint = () => (
  <PaintWin aria-label="outdo.png - Paint">
    <TitleBar $h={31}>
      <QuickBar $pad={8}>
        <PaletteIcon s={17} />
        <Bar />
        <SaveIcon />
        <UndoIcon />
        <UndoIcon flip />
        <QatArrow />
        <Bar />
      </QuickBar>
      <WinTitle $pad={6}>outdo.png - Paint</WinTitle>
      <Captions />
    </TitleBar>
    <TabRow>
      <Tab $kind="file">File</Tab>
      <Tab $kind="active" $w={58}>Home</Tab>
      <Tab>View</Tab>
      <TabTools>
        <Chevron />
        <HelpButton aria-label="Help">?</HelpButton>
      </TabTools>
    </TabRow>
    <PaintRibbon />
    <WorkArea>
      <Sheet>
        <Cursor width="22" height="20" viewBox="0 0 22 20">
          <path d="M1 9.500h3M16 9.500h4M10.500 1v3M10.500 15v4M10 9.500h1" stroke="#000" strokeDasharray="1 1" />
        </Cursor>
        <Drawn>outdo</Drawn>
        <Handle $x="100%" $y="141px" />
        <Handle $x="284px" $y="100%" />
        <Handle $x="100%" $y="100%" />
      </Sheet>
    </WorkArea>
    <StatusBar>
      <StatusCell $w={156} $pad={3}><MoveIcon />56, 21px</StatusCell>
      <StatusCell $w={156}><DimIcon dash /></StatusCell>
      <StatusCell $w={156}><DimIcon />572 × 286px</StatusCell>
      <StatusCell $w={156}><DiskIcon />Size: 1.2KB</StatusCell>
      <StatusCell />
      <ZoomBox>
        100%
        <RoundButton aria-label="Zoom out"><Minimize /></RoundButton>
        <Slider type="range" aria-label="Zoom" defaultValue={50} />
        <RoundButton aria-label="Zoom in">
          <svg width="8" height="8" viewBox="0 0 8 8"><path d="M0 4h8M4 0v8" stroke="#333" /></svg>
        </RoundButton>
      </ZoomBox>
    </StatusBar>
  </PaintWin>
);

export default function App() {
  return (
    <Screen>
      <Global />
      <Desktop>
        <IconGrid>
          {shortcuts.map((s) => (
            <Shortcut key={s.label} $col={s.col} $row={s.row}>
              {s.icon}
              <ShortcutLabel>{s.label}</ShortcutLabel>
            </Shortcut>
          ))}
        </IconGrid>
        <Explorer />
        <Paint />
        <Watermark>
          <span>ANY</span>
          <PlayMark />
          <span>RUN</span>
        </Watermark>
      </Desktop>
      <Taskbar>
        <StartButton aria-label="Start"><WindowsLogo /></StartButton>
        <Search>
          <SearchIcon />
          <SearchInput aria-label="Search" placeholder="Type here to search" />
        </Search>
        <Apps>
          <AppButton aria-label="Task view" $wide><TaskViewIcon /></AppButton>
          <AppButton aria-label="Edge" $wide><EdgeIcon s={24} link={false} /></AppButton>
          <AppButton aria-label="File Explorer" $line="#76b9ed"><FilesIcon /></AppButton>
          <AppButton aria-label="Firefox" $wide><FirefoxIcon s={24} link={false} /></AppButton>
          <AppButton aria-label="Installer" $line="#4fd83c" $bg="linear-gradient(90deg, #1f6b33 15px, #1f3338 15px)"><InstallerIcon /></AppButton>
          <AppButton aria-label="Paint" $wide $line="#76b9ed" $bg="#364850"><PaletteIcon /></AppButton>
        </Apps>
        <Tray>
          <TrayButton aria-label="Hidden icons"><Chevron s={12} c="#fff" /></TrayButton>
          <TrayButton aria-label="Meet now"><MeetIcon /></TrayButton>
          <TrayButton aria-label="Network"><NetworkIcon /></TrayButton>
          <TrayButton aria-label="Volume"><VolumeIcon /></TrayButton>
          <Clock>9:10 PM<br />2/14/2025</Clock>
          <TrayButton aria-label="Notifications" $w={38}><NoticeIcon /></TrayButton>
          <ShowDesktop aria-label="Show desktop" />
        </Tray>
      </Taskbar>
    </Screen>
  );
}
